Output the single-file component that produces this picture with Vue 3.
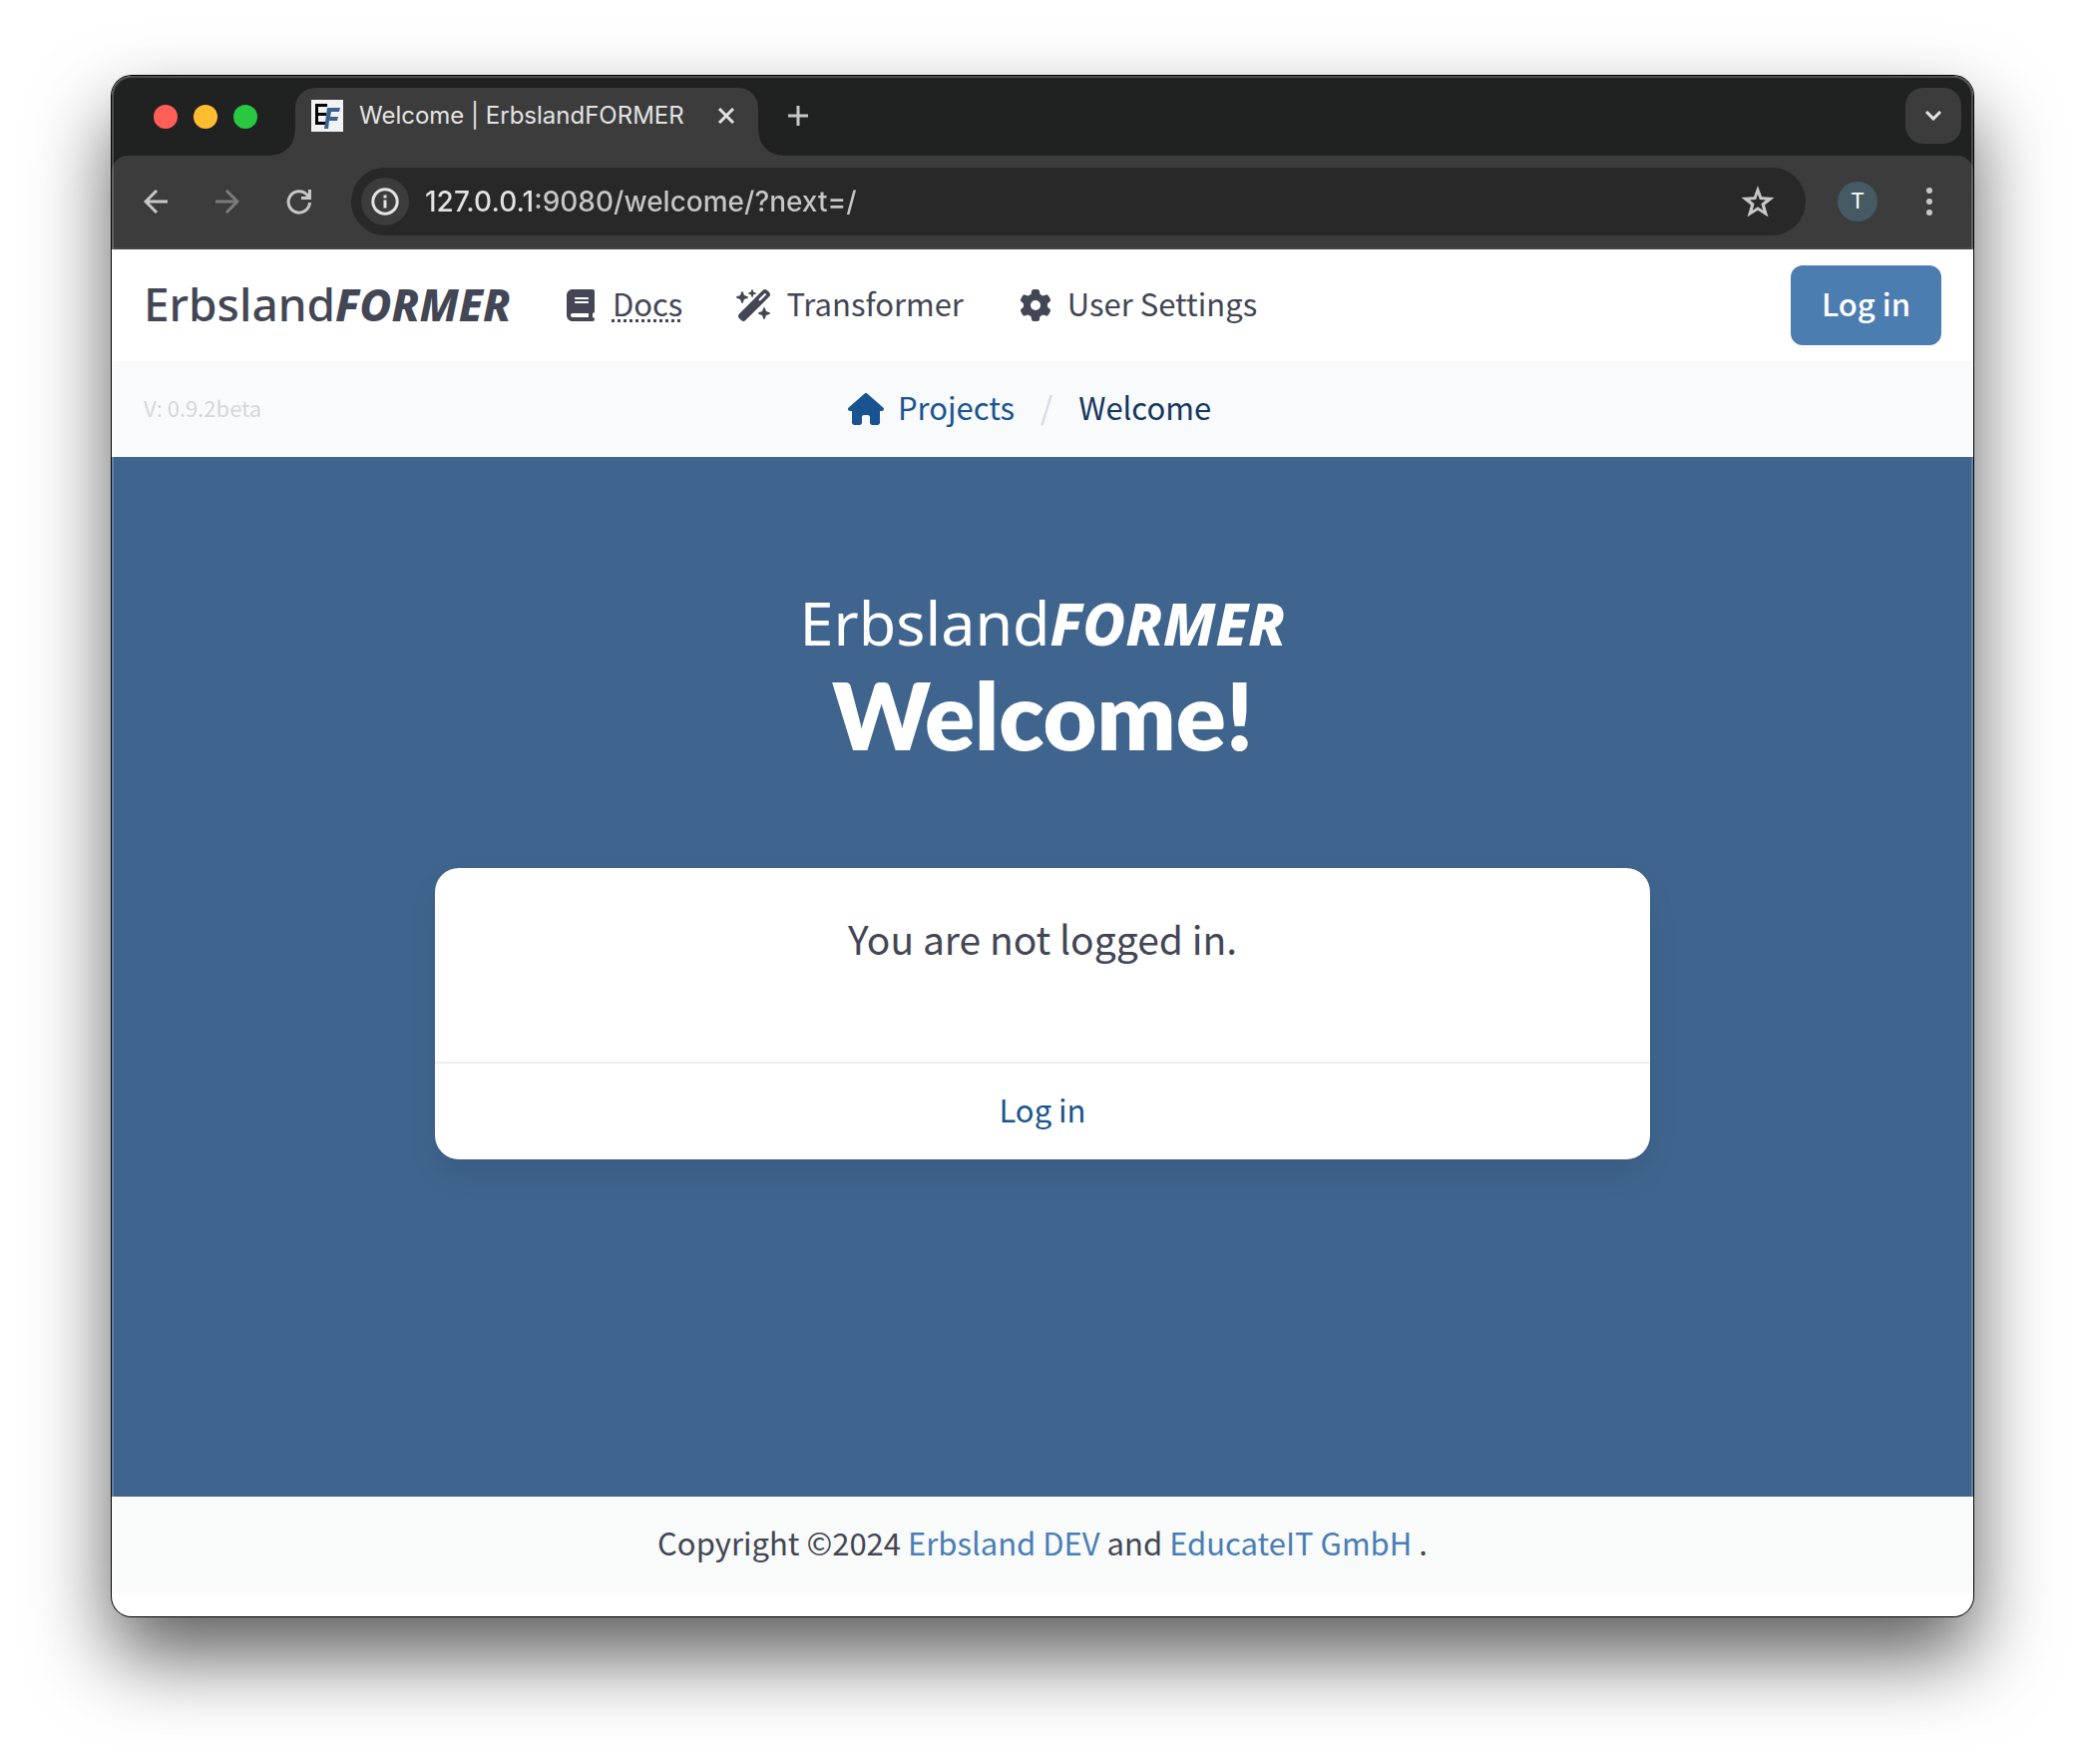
<script setup>
import { ref } from 'vue'

const address = ref('127.0.0.1:9080/welcome/?next=/')

const navItems = [
  {
    label: 'Docs',
    dotted: true,
    box: '0 0 448 512',
    width: 28,
    path: 'M96 0C43 0 0 43 0 96V416c0 53 43 96 96 96H384h32c17.7 0 32-14.3 32-32s-14.3-32-32-32V384c17.7 0 32-14.3 32-32V32c0-17.7-14.3-32-32-32H384 96zm0 384H352v64H96c-17.7 0-32-14.3-32-32s14.3-32 32-32zm32-240c0-8.8 7.2-16 16-16H336c8.8 0 16 7.2 16 16s-7.2 16-16 16H144c-8.8 0-16-7.2-16-16zm16 48H336c8.8 0 16 7.2 16 16s-7.2 16-16 16H144c-8.8 0-16-7.2-16-16s7.2-16 16-16z',
  },
  {
    label: 'Transformer',
    box: '0 0 576 512',
    width: 36,
    path: 'M234.7 42.7L197 56.8c-3 1.1-5 4-5 7.2s2 6.1 5 7.2l37.7 14.1L248.8 123c1.1 3 4 5 7.2 5s6.1-2 7.2-5l14.1-37.7L315 71.2c3-1.1 5-4 5-7.2s-2-6.1-5-7.2L277.3 42.7 263.2 5c-1.1-3-4-5-7.2-5s-6.1 2-7.2 5L234.7 42.7zM46.1 395.4c-18.7 18.7-18.7 49.1 0 67.9l34.6 34.6c18.7 18.7 49.1 18.7 67.9 0L529.9 116.5c18.7-18.7 18.7-49.1 0-67.9L495.3 14.1c-18.7-18.7-49.1-18.7-67.9 0L46.1 395.4zM484.6 82.6l-105 105-23.3-23.3 105-105 23.3 23.3zM7.5 117.2C3 118.9 0 123.2 0 128s3 9.1 7.5 10.8L64 160l21.2 56.5c1.7 4.5 6 7.5 10.8 7.5s9.1-3 10.8-7.5L128 160l56.5-21.2c4.5-1.7 7.5-6 7.5-10.8s-3-9.1-7.5-10.8L128 96 106.8 39.5C105.1 35 100.8 32 96 32s-9.1 3-10.8 7.5L64 96 7.5 117.2zm352 256c-4.5 1.7-7.5 6-7.5 10.8s3 9.1 7.5 10.8L416 416l21.2 56.5c1.7 4.5 6 7.5 10.8 7.5s9.1-3 10.8-7.5L480 416l56.5-21.2c4.5-1.7 7.5-6 7.5-10.8s-3-9.1-7.5-10.8L480 352l-21.2-56.5c-1.7-4.5-6-7.5-10.8-7.5s-9.1 3-10.8 7.5L416 352l-56.5 21.2z',
  },
  {
    label: 'User Settings',
    box: '0 0 512 512',
    width: 32,
    path: 'M495.9 166.6c3.2 8.7 .5 18.4-6.4 24.6l-43.3 39.4c1.1 8.3 1.7 16.8 1.7 25.4s-.6 17.1-1.7 25.4l43.3 39.4c6.9 6.2 9.6 15.9 6.4 24.6c-4.4 11.9-9.7 23.3-15.8 34.3l-4.7 8.1c-6.6 11-14 21.4-22.1 31.2c-5.9 7.2-15.7 9.6-24.5 6.8l-55.7-17.7c-13.4 10.3-28.2 18.9-44 25.4l-12.5 57.1c-2 9.1-9 16.3-18.2 17.8c-13.8 2.3-28 3.5-42.5 3.5s-28.7-1.2-42.5-3.5c-9.2-1.5-16.2-8.7-18.2-17.8l-12.5-57.1c-15.8-6.5-30.6-15.1-44-25.4L83.1 425.9c-8.8 2.8-18.6 .3-24.5-6.8c-8.1-9.8-15.5-20.2-22.1-31.2l-4.7-8.1c-6.1-11-11.4-22.4-15.8-34.3c-3.2-8.7-.5-18.4 6.4-24.6l43.3-39.4C64.6 273.1 64 264.6 64 256s.6-17.1 1.7-25.4L22.4 191.2c-6.9-6.2-9.6-15.9-6.4-24.6c4.4-11.9 9.7-23.3 15.8-34.3l4.7-8.1c6.6-11 14-21.4 22.1-31.2c5.9-7.2 15.7-9.6 24.5-6.8l55.7 17.7c13.4-10.3 28.2-18.9 44-25.4l12.5-57.1c2-9.1 9-16.3 18.2-17.8C227.3 1.2 241.5 0 256 0s28.7 1.2 42.5 3.5c9.2 1.5 16.2 8.7 18.2 17.8l12.5 57.1c15.8 6.5 30.6 15.1 44 25.4l55.7-17.7c8.8-2.8 18.6-.3 24.5 6.8c8.1 9.8 15.5 20.2 22.1 31.2l4.7 8.1c6.1 11 11.4 22.4 15.8 34.3zM256 336a80 80 0 1 0 0-160 80 80 0 1 0 0 160z',
  },
]
</script>

<template>
  <div class="desktop">
    <div class="window">
      <div class="tab-strip">
        <div class="lights">
          <button class="light red" aria-label="Close window"></button>
          <button class="light yellow" aria-label="Minimize window"></button>
          <button class="light green" aria-label="Zoom window"></button>
        </div>
        <div class="tab">
          <svg class="favicon" viewBox="0 0 32 32" width="32" height="32" aria-hidden="true">
            <rect width="32" height="32" fill="#f2f2f2" />
            <path d="M4 4H16V7H7V13H15V16H7V22H16V25H4Z" fill="#000" />
            <path d="M16 8H29L28 12H20L19 17H27L26 21H18L17 29H13Z" fill="#3b628e" />
          </svg>
          <span class="tab-title">Welcome | ErbslandFORMER</span>
          <button class="tab-close" aria-label="Close tab">
            <svg viewBox="0 0 16 16" width="16" height="16"><path d="M1 1L15 15M15 1L1 15" stroke="#e3e3e3" stroke-width="3" /></svg>
          </button>
        </div>
        <button class="new-tab" aria-label="New tab">
          <svg viewBox="0 0 20 20" width="20" height="20"><path d="M10 0V20M0 10H20" stroke="#c7c7c7" stroke-width="3" /></svg>
        </button>
        <button class="tab-search" aria-label="Search tabs">
          <svg viewBox="0 0 16 10" width="16" height="10"><path d="M1 1L8 8L15 1" fill="none" stroke="#e3e3e3" stroke-width="3" /></svg>
        </button>
      </div>

      <div class="toolbar">
        <div class="history">
          <button class="tool" aria-label="Back">
            <svg viewBox="0 0 24 24" width="24" height="24"><path d="M24 12H2M13 1L2 12L13 23" fill="none" stroke="#c7c7c7" stroke-width="3" /></svg>
          </button>
          <button class="tool" aria-label="Forward">
            <svg viewBox="0 0 24 24" width="24" height="24"><path d="M0 12H22M11 1L22 12L11 23" fill="none" stroke="#7c7c7c" stroke-width="3" /></svg>
          </button>
          <button class="tool" aria-label="Reload">
            <svg viewBox="0 0 26 26" width="26" height="26"><path d="M23.5 14A10.7 10.7 0 1 1 21 6.5L23 9" fill="none" stroke="#c7c7c7" stroke-width="3" /><path d="M22 1H25V11H15V8H22Z" fill="#c7c7c7" /></svg>
          </button>
        </div>
        <div class="address">
          <button class="site-info" aria-label="Site information">
            <svg viewBox="0 0 28 28" width="28" height="28"><circle cx="14" cy="14" r="12.2" fill="none" stroke="#e3e3e3" stroke-width="3" /><path d="M12.5 12.5H15.5V20.5H12.5ZM12.5 7.5H15.5V10.5H12.5Z" fill="#e3e3e3" /></svg>
          </button>
          <input v-model="address" class="url" type="text" aria-label="Address" spellcheck="false" />
          <button class="bookmark" aria-label="Bookmark this page">
            <svg viewBox="0 0 34 32" width="34" height="32"><path fill-rule="evenodd" d="M17 0L21 11.2L33.5 12L24 19.6L27.5 31.5L17 24.8L6.5 31.5L10 19.6L0.5 12L13 11.2ZM17 8.5L15.2 14L9 14.6L13.6 18.3L11.8 24.7L17 21.3L22.2 24.7L20.4 18.3L25 14.6L18.8 14Z" fill="#c7c7c7" /></svg>
          </button>
        </div>
        <button class="profile" aria-label="Profile T">T</button>
        <button class="menu" aria-label="Browser menu">
          <svg viewBox="0 0 6 28" width="6" height="28" fill="#c7c7c7"><circle cx="3" cy="3" r="3" /><circle cx="3" cy="14" r="3" /><circle cx="3" cy="25" r="3" /></svg>
        </button>
      </div>

      <header class="navbar">
        <a class="brand" href="#">Erbsland<b>FORMER</b></a>
        <nav class="nav-items" aria-label="Main">
          <a v-for="item in navItems" :key="item.label" class="nav-item" href="#">
            <span class="icon">
              <svg :viewBox="item.box" :width="item.width" height="32" fill="currentColor" aria-hidden="true"><path :d="item.path" /></svg>
            </span>
            <span class="label" :class="{ dotted: item.dotted }">{{ item.label }}</span>
          </a>
        </nav>
        <button class="login"><span class="label">Log in</span></button>
      </header>

      <div class="crumb-bar">
        <span class="version label">V: 0.9.2beta</span>
        <nav aria-label="Breadcrumb">
          <ol class="crumbs">
            <li>
              <a class="crumb" href="#">
                <span class="icon">
                  <svg viewBox="0 0 576 512" width="36" height="32" fill="currentColor" aria-hidden="true"><path d="M575.8 255.5c0 18-15 32.1-32 32.1h-32l.7 160.2c0 2.7-.2 5.4-.5 8.1V472c0 22.1-17.9 40-40 40H456c-1.1 0-2.2 0-3.3-.1c-1.4 .1-2.8 .1-4.2 .1H416 392c-22.1 0-40-17.9-40-40V448 384c0-17.7-14.3-32-32-32H256c-17.7 0-32 14.3-32 32v64 24c0 22.1-17.9 40-40 40H160 128.1c-1.5 0-3-.1-4.5-.2c-1.2 .1-2.4 .2-3.6 .2H104c-22.1 0-40-17.9-40-40V360c0-.9 0-1.9 .1-2.8V287.6H32c-18 0-32-14-32-32.1c0-9 3-17 10-24L266.4 8c7-7 15-8 22-8s15 2 21 7L564.8 231.5c8 7 12 15 11 24z" /></svg>
                </span>
                <span class="label">Projects</span>
              </a>
            </li>
            <li class="slash label" aria-hidden="true">/</li>
            <li><a class="crumb current" href="#" aria-current="page"><span class="label">Welcome</span></a></li>
          </ol>
        </nav>
      </div>

      <main class="hero">
        <p class="hero-brand">Erbsland<b>FORMER</b></p>
        <h1>Welcome!</h1>
        <section class="card">
          <p class="message">You are not logged in.</p>
          <a class="card-action" href="#"><span class="label">Log in</span></a>
        </section>
      </main>

      <footer class="footer">
        <p class="label">Copyright ©2024 <a href="#">Erbsland DEV</a> and <a href="#">EducateIT GmbH</a> .</p>
      </footer>
    </div>
  </div>
</template>

<style>
body {
  margin: 0;
  background: #fff;
}
</style>

<style scoped>
* {
  box-sizing: border-box;
}

button {
  display: flex;
  align-items: center;
  justify-content: center;
  padding: 0;
  border: 0;
  background: none;
  cursor: pointer;
}

a {
  color: inherit;
  text-decoration: none;
}

p,
h1,
ol {
  margin: 0;
  padding: 0;
}

svg {
  display: block;
  flex: none;
}

.desktop {
  display: flex;
  min-height: 100vh;
  padding: 76px 112px 148px;
  overflow: hidden;
}

.window {
  position: relative;
  display: flex;
  flex: 1;
  flex-direction: column;
  min-width: 0;
  padding-bottom: 24px;
  border-radius: 20px;
  background: #fff;
  box-shadow: 0 0 0 1px #000, 0 40px 80px rgba(0, 0, 0, 0.64);
  color: #434654;
  font: 31px/48px "Noto Sans CJK SC", "Noto Sans", sans-serif;
}

/* light rim along the inside of the window edge */
.window::after {
  position: absolute;
  inset: 0;
  border-radius: 20px;
  box-shadow: inset 0 0 0 2px rgba(255, 255, 255, 0.2);
  content: "";
  pointer-events: none;
}

/* Browser chrome */
.tab-strip {
  display: flex;
  height: 96px;
  margin-bottom: -16px;
  padding: 12px 12px 16px 42px;
  border-radius: 20px 20px 0 0;
  background: #202221;
}

.lights {
  display: flex;
  align-items: center;
  gap: 16px;
  padding-bottom: 10px;
}

.light {
  width: 24px;
  height: 24px;
  border-radius: 50%;
}

.red {
  background: #ff5f57;
}

.yellow {
  background: #febc2e;
}

.green {
  background: #28c840;
}

.tab {
  position: relative;
  display: flex;
  align-items: center;
  width: 464px;
  margin-left: 38px;
  padding: 0 24px 12px 16px;
  border-radius: 20px 20px 0 0;
  background: #3c3c3c;
}

.tab::before,
.tab::after {
  position: absolute;
  bottom: 0;
  width: 24px;
  height: 24px;
  content: "";
}

.tab::before {
  right: 100%;
  background: radial-gradient(circle at 0 0, transparent 23px, #3c3c3c 24px);
}

.tab::after {
  left: 100%;
  background: radial-gradient(circle at 100% 0, transparent 23px, #3c3c3c 24px);
}

.tab-title {
  flex: 1;
  margin-left: 16px;
  color: #e3e3e3;
  font: 24px/32px Inter, sans-serif;
  white-space: nowrap;
}

.new-tab {
  width: 56px;
  height: 56px;
  margin-left: 12px;
}

.tab-search {
  width: 56px;
  height: 56px;
  margin-left: auto;
  border-radius: 18px;
  background: #3c3c3c;
}

.toolbar {
  display: flex;
  align-items: center;
  height: 94px;
  padding: 0 16px;
  border-bottom: 2px solid #464646;
  border-radius: 16px 16px 0 0;
  background: #3c3c3c;
}

.history {
  display: flex;
  gap: 16px;
}

.tool,
.menu {
  width: 56px;
  height: 56px;
}

.address {
  display: flex;
  flex: 1;
  align-items: center;
  height: 68px;
  margin-left: 24px;
  padding: 0 20px 0 10px;
  border-radius: 34px;
  background: #282828;
}

.site-info {
  flex: none;
  width: 48px;
  height: 48px;
  border-radius: 50%;
  background: #3c3c3c;
}

.url {
  flex: 1;
  min-width: 0;
  margin-left: 16px;
  padding: 0;
  border: 0;
  outline: 0;
  /* the host is brighter than the rest of the address */
  background: linear-gradient(90deg, #e3e3e3 108px, #c7c7c7 108px);
  background-clip: text;
  color: transparent;
  caret-color: #e3e3e3;
  font: 500 28px/40px Inter, sans-serif;
}

.bookmark {
  width: 56px;
  height: 56px;
}

.profile {
  width: 40px;
  height: 40px;
  margin: 0 24px 0 32px;
  border-radius: 50%;
  background: #455a64;
  color: #fff;
  font: 22px/40px Roboto, sans-serif;
}

/* Page */
.label {
  padding-bottom: 4px;
  white-space: nowrap;
}

.icon {
  display: flex;
  justify-content: center;
  width: 48px;
  margin-right: 8px;
}

.navbar {
  display: flex;
  align-items: center;
  height: 112px;
  padding: 0 32px;
}

.brand {
  padding-bottom: 4px;
  font: 500 46px/64px "Noto Sans", sans-serif;
}

.brand b {
  font-size: 44px;
}

b {
  font-style: italic;
  font-weight: 800;
}

.nav-items {
  display: flex;
  margin-left: 22px;
}

.nav-item {
  display: flex;
  align-items: center;
  padding: 0 24px;
}

.dotted {
  text-decoration: underline dotted 3px;
  text-underline-offset: 3px;
}

.login {
  height: 80px;
  margin-left: auto;
  padding: 0 31px;
  border-radius: 12px;
  background: #4c7db1;
  color: #fff;
  font: inherit;
  font-weight: 500;
}

.crumb-bar {
  display: grid;
  grid-template-columns: 1fr auto 1fr;
  align-items: center;
  height: 96px;
  padding: 0 32px;
  background: #f9fafc;
}

.version {
  color: #d5d6d9;
  font-size: 22px;
}

.crumbs {
  display: flex;
  padding-right: 32px;
  list-style: none;
}

.crumb {
  display: flex;
  align-items: center;
  color: #1a5490;
}

.current {
  color: #14375f;
}

.slash {
  padding: 0 26px 4px;
  color: #d6d9e0;
}

.hero {
  display: flex;
  flex: 1;
  flex-direction: column;
  align-items: center;
  padding: 130px 20px 128px;
  background: #3f658e;
  color: #fff;
}

.hero-brand {
  font: 61px/72px "Noto Sans", sans-serif;
}

.hero-brand b {
  font-size: 59px;
}

h1 {
  margin: 8px 0 106px;
  font: 800 93px/96px Lato, sans-serif;
}

.card {
  width: 66.67%;
  border-radius: 24px;
  background: #fff;
  box-shadow: 0 16px 32px -4px rgba(10, 10, 10, 0.1);
  color: #434654;
  text-align: center;
}

.message {
  padding: 40px 48px 94px;
  font-size: 39px;
  line-height: 60px;
}

.card-action {
  display: block;
  padding: 22px 0 26px;
  border-top: 2px solid #ededf0;
  color: #1a5490;
}

.footer {
  display: flex;
  align-items: center;
  justify-content: center;
  height: 96px;
  background: #f9fbfa;
}

.footer a {
  color: #4a7eb5;
}
</style>
